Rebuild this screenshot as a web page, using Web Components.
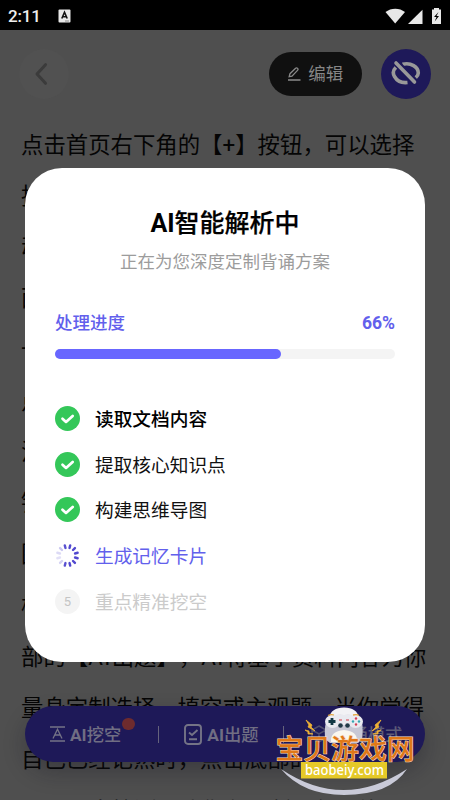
<!DOCTYPE html>
<html lang="zh-CN">
<head>
<meta charset="utf-8">
<title>AI智能解析</title>
<style>
html,body{margin:0;padding:0;background:#4f4f4f;overflow:hidden}
body{width:450px;height:800px}
</style>
</head>
<body>
<recite-app></recite-app>
<script>
const define = (name, html) => {
  const t = document.createElement('template');
  t.innerHTML = html;
  customElements.define(name, class extends HTMLElement {
    constructor(){ super(); this.attachShadow({mode:'open'}).append(t.content.cloneNode(true)); }
  });
};

define('status-bar', `<style>
:host{display:flex;height:30px;background:#000;align-items:center;box-sizing:border-box;padding:1px 8px 0 8px;color:#eee;font:500 17px/30px Roboto,sans-serif}
.time{width:50px;letter-spacing:-.2px}
svg{display:block}.sp{flex:1}
</style><span class="time">2:11</span>
<svg width="13" height="14" viewBox="0 0 13 14"><rect x=".5" y=".5" width="12" height="13" rx="1" fill="#e8e8e8"/><path d="M3.800 9.500 6.500 3.300 9.200 9.500M4.600 7.700h3.800" fill="none" stroke="#111" stroke-width="1.600"/><path d="M7 12h4" stroke="#888"/></svg>
<span class="sp"></span>
<svg width="57" height="18" viewBox="0 0 57 18"><path d="M.5 5C6 .5 14.500 .5 20 5L10.200 16.600Z" fill="#e8e8e8"/><path d="M23 17 37.500 2.700V17Z" fill="#e8e8e8"/><path d="M47 2.500h2V1h5v1.500h2V17h-9Z" fill="#e8e8e8"/><path d="M53.500 5 49 10h2.500L49.700 14.500 54 9h-2.500Z" fill="#000"/></svg>`);

define('nav-header', `<style>
:host{display:flex;height:89.500px;box-sizing:border-box;padding:18.500px 19px 0;align-items:flex-start;color:#858585}
.back,.eye{width:50px;height:50px;border-radius:50%;display:grid;place-items:center;flex:none}
.back{background:#515151}.eye{background:#1e1959;margin-left:19px}
.edit{margin:3px 0 0 auto;width:93.500px;height:44px;border-radius:22px;background:#101010;display:flex;align-items:center;justify-content:center;gap:7px;font:400 17.500px/44px Roboto,"Noto Sans CJK SC",sans-serif}
svg{display:block}
</style>
<div class="back"><svg width="24" height="24" viewBox="0 0 24 24" fill="none" stroke="#3b3b3b" stroke-width="3" stroke-linecap="round" stroke-linejoin="round"><path d="M13.500 2.700 5 12l8.500 9.300"/></svg></div>
<div class="edit"><svg width="14" height="14" viewBox="0 0 14 14" fill="none" stroke="#8a8a8a" stroke-width="1.300"><path d="M2.200 9.700 3 6.700 8.600 1.300q1-.9 2 .1.900 1-.1 2L5 9.100ZM1 13h12.500"/></svg><span>编辑</span></div>
<div class="eye"><svg width="32" height="32" viewBox="0 0 32 32" fill="none" stroke="#999" stroke-width="3.600"><path d="M12.500 6.300C21 4 28.300 9.200 28.300 15q0 2.500-2.800 4.800M6 9.200Q1.500 13.500 4.500 18.500 8.500 25.500 17.500 24.500"/><path d="M6 4.500 25.500 24.500" stroke="#1e1959" stroke-width="7"/><path d="M6 5 24.500 24" stroke-linecap="round"/></svg></div>`);

define('document-text', `<style>
:host{display:block;padding-left:21px;color:#050505;font:400 22.400px/51.240px Roboto,"Noto Sans CJK SC",sans-serif;white-space:nowrap;font-kerning:none;text-spacing-trim:space-all}
</style><slot></slot>`);
define('text-line', `<style>:host{display:block;height:51.240px}::slotted(span){letter-spacing:1.400px}</style><slot></slot>`);

define('action-bar', `<style>
:host{display:flex;box-sizing:border-box;width:400px;height:56px;border-radius:28px;background:#1e1958;box-shadow:0 10px 22px rgba(15,15,30,.3);color:#706e83;font:500 17.300px/56px Roboto,"Noto Sans CJK SC",sans-serif;align-items:center;padding-left:25px;white-space:nowrap}
.item{display:flex;align-items:center;position:relative}
.item span,.item b{padding-top:1px}
b{font-weight:500}b::first-letter{font-weight:700}
.dot{position:absolute;left:72px;top:12px;width:12.500px;height:12.500px;box-sizing:border-box;border-radius:50%;background:#6e2b2e}
i{width:1.300px;height:17px;background:#65637c}
svg{display:block;flex:none}em{font-style:normal;font-weight:700}
</style>
<div class="item" style="width:108px;gap:5px"><svg width="15" height="16" viewBox="0 0 15 16" fill="none" stroke="#747386" stroke-width="1.300"><path d="M0 1h15M0 15h15M3 12.500 7.500 3.200 12 12.500M4.800 9h5.400"/></svg><span><em>AI</em>挖空</span><div class="dot"></div></div><i></i>
<div class="item" style="width:123.500px;gap:5px;padding-left:25px;box-sizing:border-box"><svg width="18" height="21" viewBox="0 0 18 21" fill="none" stroke="#747386" stroke-width="1.900"><rect x="1" y="1" width="16" height="19" rx="3"/><path d="M5 8.500 8 11l5.500-5M5 15.200h8"/></svg><span><em>AI</em>出题</span></div><i></i>
<div class="item" style="padding-left:27px;gap:6px;color:#5d5b77"><svg width="16" height="18" viewBox="0 0 16 18" fill="none" stroke="#504e6d" stroke-width="1.500"><path d="M8 1 15 5v8l-7 4-7-4V5ZM1 5l7 4 7-4M8 9v8"/></svg><span>背诵模式</span></div>`);

define('step-row', `<style>
:host{display:flex;height:45.600px;align-items:center;gap:15px;color:#111;font:400 18.700px/26px Roboto,"Noto Sans CJK SC",sans-serif}
:host([state=first]){font-weight:500;color:#000}:host([state=active]){color:#6260ec}:host([state=wait]){color:#cbcbcb}
.ic{width:25px;height:25px;flex:none}.ic>*{display:none}
.label{padding-top:3px}
.ok,.load{width:25px;height:25px}
:host([state=first]) .ok,:host([state=done]) .ok,:host([state=active]) .load{display:block}
:host([state=wait]) .num{display:grid;place-items:center;width:25px;height:25px;border-radius:50%;background:#f4f4f4;font-size:13px;font-weight:400;color:#c4c4c4}
</style><span class="ic"><svg class="ok" viewBox="0 0 25 25"><circle cx="12.500" cy="12.500" r="12.500" fill="#34c759"/><path d="m7.500 12.700 3.500 3.200 6.700-6" fill="none" stroke="#fff" stroke-width="2.700" stroke-linecap="round" stroke-linejoin="round"/></svg>
<svg class="load" viewBox="0 0 25 25"></svg><span class="num">5</span></span><span class="label"><slot></slot></span>`);
document.addEventListener('DOMContentLoaded', () => {
  const modal = document.querySelector('recite-app').shadowRoot.querySelector('progress-dialog');
  const svg = modal.shadowRoot.querySelector('step-row[state=active]').shadowRoot.querySelector('.load');
  const alphas = [1,1,1,1,1,1,.95,.25,.17,.2,.3,.95];
  svg.innerHTML = alphas.map((a,k)=>`<path d="M12.500 2v2.700" stroke="#5148cf" stroke-opacity="${a}" stroke-width="2.400" stroke-linecap="round" transform="rotate(${k*30+15} 12.500 12.500)"/>`).join('');
});

define('progress-dialog', `<style>
:host{display:block;box-sizing:border-box;width:400px;height:494px;border-radius:37px;background:#fff;padding:37px 30px 0;font-family:Roboto,"Noto Sans CJK SC",sans-serif}
h1{margin:0;font-weight:700;font-size:25px;line-height:38px;text-align:center;color:#000}
h1 span{font-weight:500;-webkit-text-stroke:.25px #000}
.sub{font-size:17.500px;line-height:26px;text-align:center;color:#9c9c9c;margin-top:6.500px}
.head{display:flex;justify-content:space-between;color:#6260ec;font-size:17.500px;font-weight:500;line-height:26px;margin-top:35px}
.head span:last-child{font-weight:700;font-size:17.500px}
.track{height:10px;border-radius:5px;background:#f4f4f4;margin-top:13px}
.fill{width:226px;height:10px;border-radius:5px;background:#6866ff}
.steps{margin-top:37px}
</style><h1>AI<span>智能解析中</span></h1><div class="sub">正在为您深度定制背诵方案</div>
<div class="head"><span>处理进度</span><span>66%</span></div><div class="track"><div class="fill"></div></div>
<div class="steps"><step-row state="first">读取文档内容</step-row><step-row state="done">提取核心知识点</step-row><step-row state="done">构建思维导图</step-row><step-row state="active">生成记忆卡片</step-row><step-row state="wait">重点精准挖空</step-row></div>`);

define('site-watermark', `<style>
:host{display:block;width:145px;height:92px}svg{display:block;overflow:visible}
text{font-family:"Noto Sans CJK SC",sans-serif}
.cn{font-size:27.800px;font-weight:500}.url{font-family:"Noto Sans","Open Sans",sans-serif;font-size:15px;font-weight:500}
</style><svg width="145" height="92" viewBox="273 705 145 92">
<path d="M281 769Q343 811 407 769Q390 795 344 795Q303 795 281 769Z" fill="#c9cad8"/>
<path d="m306 720 6 5-1 2 4 4-7-4 1-2Zm-1 10 4 1 0 2 4 1-5 0 0-2Zm76-10-6 5 1 2-4 4 7-4-1-2Zm0 10-4 1 0 2-4 1 5 0 0-2Z" fill="#edb135" stroke="#edb135" stroke-width=".8"/>
<path d="M329 718Q331 707.500 344 707.500Q357 707.500 359 718Z" fill="#f2f2f5"/>
<path d="M325 739Q324 723 328 718Q333 714 344 715Q355 714 360 718Q364 723 362 739L358 743H330Z" fill="#c8c8d5"/>
<ellipse cx="332.500" cy="721.500" rx="7.500" ry="6.500" fill="#e9eaf0"/><ellipse cx="355.500" cy="721.500" rx="7.500" ry="6.500" fill="#e9eaf0"/><path d="M334 715h20v10h-20Z" fill="#e9eaf0"/>
<path d="M331 742Q330 731 344 730Q358 731 357 742Z" fill="#faf7ef"/>
<path d="M328.500 721.500h7M332 718v7" stroke="#123844" stroke-width="2.800"/>
<g fill="#d63d53"><circle cx="356" cy="718.500" r="1.200"/><circle cx="356" cy="724.500" r="1.200"/></g><g fill="#33a7b2"><circle cx="353" cy="721.500" r="1.200"/><circle cx="359" cy="721.500" r="1.200"/></g>
<circle cx="340.500" cy="725.500" r="2.300" fill="#203947"/><circle cx="347.500" cy="725.500" r="2.300" fill="#203947"/>
<path d="M339 720h3M346 720h3" stroke="#d43d48" stroke-width="1.200"/><path d="M328 715.500q3-1.500 6-.5M353 715q4-1 6 .5" stroke="#e2a640" stroke-width="1.300" fill="none"/>
<text class="cn" x="275.500" y="759.300" textLength="139" fill="#e07818" stroke="#f6dcc0" stroke-width="1.100" paint-order="stroke">宝贝游戏网</text>
<rect x="301" y="762" width="86" height="16.500" fill="#e5c928"/>
<text class="url" x="305" y="774.500" textLength="79" lengthAdjust="spacingAndGlyphs" fill="#fff">baobeiy.com</text>
</svg>`);

define('recite-app', `<style>
:host{display:block;position:relative;width:450px;height:800px;overflow:hidden;background:#4f4f4f}
action-bar,progress-dialog,site-watermark{position:absolute}
action-bar{left:25px;top:706px}progress-dialog{left:25px;top:167.500px}site-watermark{left:273px;top:705px}
</style><status-bar></status-bar><nav-header></nav-header>
<document-text><text-line>点击首页右下角的【+】按钮，可以选择</text-line><text-line>拍</text-line><text-line>动</text-line><text-line>面</text-line><text-line>一</text-line><text-line>点</text-line><text-line>法</text-line><text-line>钮</text-line><text-line>图</text-line><text-line>板</text-line><text-line>部的【<span>AI</span>出题】，<span>AI</span>将基于资料内容为你</text-line><text-line>量身定制选择、填空或主观题。当你觉得</text-line><text-line>自己已经记熟时，点击底部的</text-line><text-line>一【<span>AI</span>出检测，让你在不断强化训练</text-line></document-text>
<action-bar></action-bar><progress-dialog></progress-dialog><site-watermark></site-watermark>`);
</script>
</body>
</html>
